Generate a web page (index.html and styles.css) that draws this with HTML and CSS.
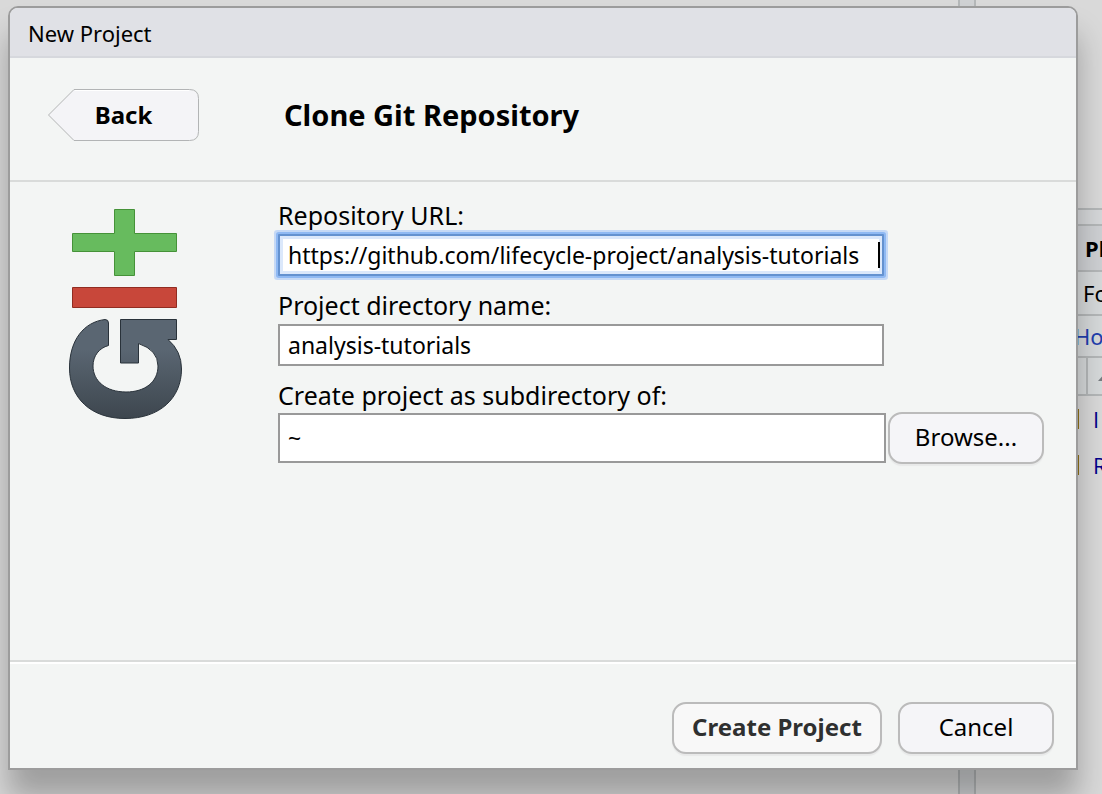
FILE: index.html
```
<!DOCTYPE html>
<html lang="en">
<head>
<meta charset="utf-8">
<title>New Project</title>
<link rel="stylesheet" href="styles.css">
</head>
<body>
<div class="workspace">
  <div class="pane-left"></div>
  <div class="splitter"></div>
  <aside class="pane-right">
    <div class="pane-gap"></div>
    <div class="pane-split"></div>
    <div class="pane-row pane-tabs">Pl</div>
    <div class="pane-row pane-tools">Fo</div>
    <div class="pane-row pane-path"><a href="#">Ho</a></div>
    <div class="pane-row pane-head"><svg class="sort-icon" width="16" height="9" viewBox="0 0 16 9"><path d="M0 9L8 0L16 9Z" fill="#777c80"/></svg></div>
    <div class="pane-file"><i class="file-icon"></i><a href="#">I</a></div>
    <div class="pane-file"><i class="file-icon"></i><a href="#">R</a></div>
  </aside>
</div>

<form class="dialog" role="dialog" aria-labelledby="dialog-title">
  <header class="titlebar" id="dialog-title">New Project</header>
  <div class="wizard-head">
    <button type="button" class="back">
      <svg class="back-shape" width="151" height="52" viewBox="0 0 151 52"><path d="M26 .5H141.500Q150.500 .5 150.500 9.500V42.500Q150.500 51.500 141.500 51.500H26L.5 26Z" fill="#f4f4f7" stroke="#b2b4b5"/><path d="M27 1.500H141" stroke="#fff" fill="none"/></svg>
      <span class="back-label">Back</span>
    </button>
    <h1 class="wizard-title">Clone Git Repository</h1>
  </div>
  <div class="wizard-body">
    <div class="logo">
      <svg width="116" height="214" viewBox="0 0 116 214" role="img" aria-label="Git">
        <defs>
          <linearGradient id="slate" x1="0" y1="0" x2="0" y2="1"><stop offset="0.3" stop-color="#5a6672"/><stop offset="1" stop-color="#3d464e"/></linearGradient>
        </defs>
        <path d="M47.500 1.500H67.500V25.500H109.500V43.500H67.500V67.500H47.500V43.500H5.500V25.500H47.500Z" fill="#67bb5e" stroke="#459238"/>
        <path d="M5.500 79.500H109.500V99.500H5.500Z" fill="#c8473a" stroke="#912c21"/>
        <path d="M53.500 111.500H109.500V131.500H101Q114.500 143 114.500 161C114.500 190 93 210.500 58 210.500C24 210.500 2.500 190 2.500 160C2.500 132 17 114 38 111.500Q41.500 111.500 41.500 115V137.500C32 140 26 148 26 158C26 173 39 184 59 184C78 184 91 174 91 158Q91 142 71.500 135.500V155H53.500Z" fill="url(#slate)" stroke="#29323a"/>
      </svg>
    </div>
    <div class="fields">
      <div class="field">
        <label for="url">Repository URL:</label>
        <div class="url-box">
          <input class="text-input focused" id="url" type="text" value="https://github.com/lifecycle-project/analysis-tutorials">
          <span class="caret"></span>
        </div>
      </div>
      <div class="field">
        <label for="name">Project directory name:</label>
        <input class="text-input" id="name" type="text" value="analysis-tutorials">
      </div>
      <div class="field">
        <label for="parent">Create project as subdirectory of:</label>
        <div class="browse-row">
          <input class="text-input tall" id="parent" type="text" value="~">
          <button type="button" class="btn">Browse...</button>
        </div>
      </div>
    </div>
  </div>
  <footer class="actions">
    <button type="submit" class="btn primary">Create Project</button>
    <button type="button" class="btn">Cancel</button>
  </footer>
</form>
</body>
</html>
```
FILE: styles.css
```
* { box-sizing: border-box; }
body {
  margin: 0;
  position: relative;
  min-height: 100vh;
  overflow: hidden;
  background: #d9d9d9;
  color: #000;
  font: 24px/30px "Noto Sans", "Open Sans", sans-serif;
}
button, input { font: inherit; color: inherit; }

.workspace { display: grid; grid-template-columns: 1fr 18px 126px; height: 100vh; }
.splitter { background: #cfd1d3; border: solid #b4b7b8; border-width: 0 2px; }
.pane-right { overflow: hidden; font-size: 22px; white-space: nowrap; }
.pane-gap { height: 208px; }
.pane-split { height: 16px; background: #d5d7d9; border-top: 2px solid #b4b7b8; }
.pane-row { display: flex; align-items: center; background: #d6d9da; border-top: 2px solid #b4b7b8; }
.pane-tabs { height: 46px; padding-left: 109px; background: #ced0d3; font-weight: bold; }
.pane-tools { height: 44px; padding-left: 107px; }
.pane-path { height: 42px; padding-left: 98px; color: #1f3fae; }
.pane-head { height: 40px; padding-left: 122px; border-bottom: 2px solid #b4b7b8; background: linear-gradient(90deg, #d6d9da 110px, #b4b7b8 110px 112px, #d6d9da 112px); }
.sort-icon { flex: none; }
.pane-file { display: flex; align-items: center; height: 46px; gap: 14px; padding-left: 83px; color: #00008b; font-family: "Open Sans", sans-serif; }
.pane-file a, .pane-path a { color: inherit; text-decoration: none; }
.file-icon { flex: none; width: 20px; height: 20px; background: #cba643; border-right: 1px solid #8f7116; }

.dialog {
  position: absolute;
  inset: 6px 24px 24px 8px;
  display: flex;
  flex-direction: column;
  overflow: hidden;
  background: #f3f5f4;
  border: 2px solid #9c9c9c;
  border-radius: 10px 10px 0 0;
  box-shadow: 0 28px 30px rgba(0, 0, 0, .27);
}
.titlebar {
  height: 50px;
  padding: 0 18px;
  line-height: 50px;
  font-size: 22px;
  background: #e0e1e6;
  border-bottom: 2px solid #d6d8dd;
}
.wizard-head {
  display: flex;
  align-items: center;
  height: 124px;
  padding: 0 38px 8px;
  gap: 85px;
  border-bottom: 2px solid #d9dbda;
}
.back { display: grid; width: 151px; height: 52px; padding: 0; border: 0; background: none; font-weight: bold; }
.back-shape, .back-label { grid-area: 1 / 1; }
.back-label { place-self: center; }
.wizard-title { margin: 0; font-size: 29px; line-height: 36px; }
.wizard-body { flex: 1; display: grid; grid-template-columns: 211px 1fr; padding: 18px 32px 0 57px; }
.logo { padding-top: 8px; }
.field { width: 606px; height: 90px; display: flex; flex-direction: column; }
.field label { flex: none; height: 34px; line-height: 30px; font-size: 25px; }
.text-input {
  width: 100%;
  height: 42px;
  padding: 0 8px;
  background: #fff;
  border: 2px solid #999;
  border-radius: 0;
  outline: 0;
  font-size: 23px;
}
.tall { flex: 1; height: 50px; }
.focused {
  border-color: #6492d0;
  box-shadow: inset 0 0 0 3px #dbe8fb, 0 0 0 2px #8fb9f3, 0 0 0 4px #c5d9f6;
  border-radius: 1px;
}
.url-box { position: relative; }
.caret { position: absolute; right: 4px; top: 8px; width: 2px; height: 26px; background: #000; }
.browse-row { display: flex; align-items: center; gap: 2px; width: 766px; margin-top: -2px; }
.btn {
  width: 156px;
  height: 52px;
  padding: 0 0 2px;
  background: #f5f5f8;
  border: 2px solid #bbb;
  border-radius: 14px;
  box-shadow: 0 2px 1px #e8e9e9;
}
.primary { width: 210px; background: #f8f8f8; color: #2f3030; font-weight: bold; }
.actions {
  display: flex;
  justify-content: flex-end;
  gap: 16px;
  height: 108px;
  padding: 40px 22px 0;
  border-top: 2px solid #d9dbda;
  box-shadow: inset 0 2px #fff;
}
```
